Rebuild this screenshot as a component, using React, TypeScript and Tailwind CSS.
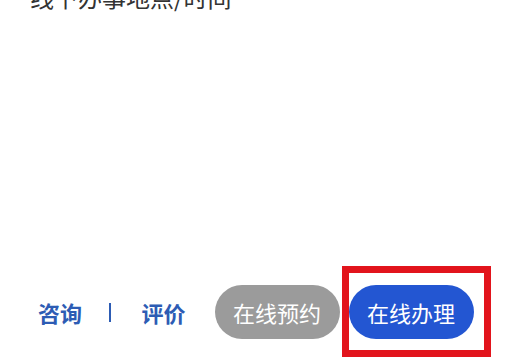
export default function App() {
  const font = { fontFamily: '"Noto Sans CJK SC", "Noto Sans", sans-serif' };

  return (
    <div
      className="flex h-[359px] w-[508px] flex-col justify-between overflow-hidden bg-white"
      style={font}
    >
      {/* section title, scrolled mostly out of view */}
      <div className="-mt-[15px] pl-[30px] text-[24px] leading-none text-[#333333]">
        线下办事地点/时间
      </div>

      {/* bottom action bar */}
      <div className="flex items-center pb-[20px] pl-[38px]">
        <span className="text-[22px] font-bold leading-none text-[#2d5cb4]">咨询</span>
        <span className="ml-[27px] h-[19px] w-[1.5px] bg-[#2d5cb4]" />
        <span className="ml-[31px] text-[22px] font-bold leading-none text-[#2d5cb4]">评价</span>
        <button className="ml-[29px] flex h-[54px] w-[125px] items-center justify-center rounded-full bg-[#9b9b9b] text-[22px] text-white">
          在线预约
        </button>
        <div className="relative ml-[9px]">
          <button className="flex h-[54px] w-[125px] items-center justify-center rounded-full bg-[#2356d2] text-[22px] text-white">
            在线办理
          </button>
          {/* highlight annotation */}
          <div className="pointer-events-none absolute -bottom-[18px] -left-[7px] -right-[17px] -top-[19px] border-[7px] border-[#e2141c]" />
        </div>
      </div>
    </div>
  );
}
